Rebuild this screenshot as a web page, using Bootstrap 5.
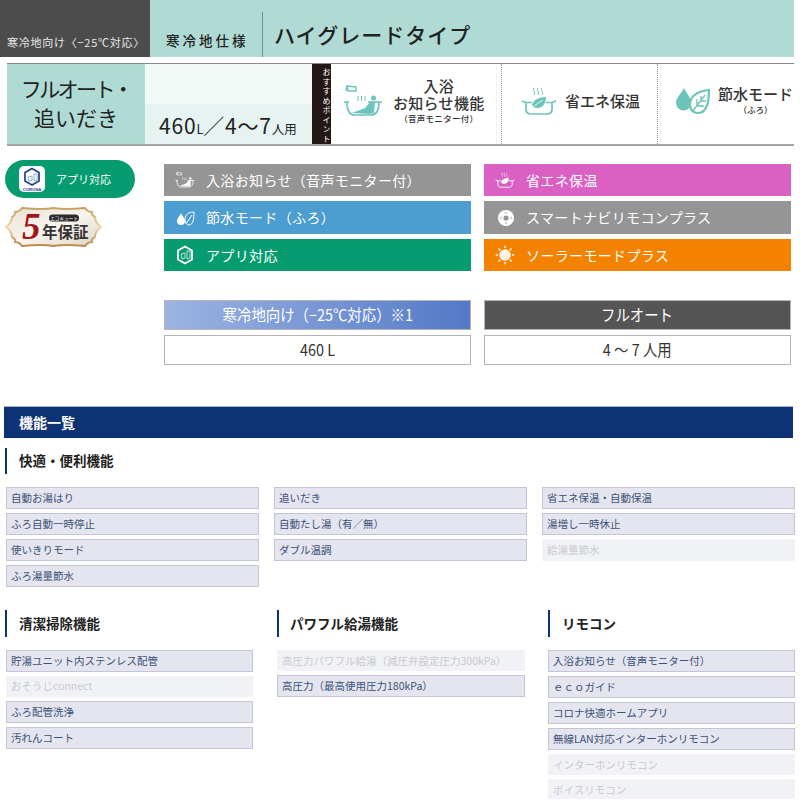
<!DOCTYPE html>
<html lang="ja">
<head>
    <meta charset="UTF-8">
    <title>ハイグレードタイプ</title>
    <link href="https://cdn.jsdelivr.net/npm/bootstrap@5.3.2/dist/css/bootstrap.min.css" rel="stylesheet">
    <style>
        html, body { height: 800px; overflow: hidden; }
        body { font-family: "Noto Sans CJK JP", "Noto Sans", sans-serif; background: #fff; color: #222; }
        .page { width: 800px; height: 800px; overflow: hidden; }

        /* product banner */
        .type-bar { height: 57px; width: 794px; background: #b0dbd5; }
        .type-dark { width: 150px; background: #4c4c4c; color: #e8e8e8; font-size: 11px; padding: 0 0 7px 7px; letter-spacing: .75px; white-space: nowrap; }
        .type-spec { width: 112px; font-size: 13.5px; font-weight: 500; letter-spacing: 3px; padding: 0 0 7px 16px; white-space: nowrap; }
        .type-name { border-left: 1px solid #6f8f8a; margin-top: 12px; padding-left: 11px; font-size: 21px; font-weight: 500; letter-spacing: 1px; }

        .point-bar { height: 83px; width: 787px; margin: 6px 0 14px 7px; border-top: 1px solid #888; border-bottom: 2px solid #a5a5a5; }
        .point-title { width: 138px; background: #b0dbd5; font-size: 21px; line-height: 29px; text-align: center; padding-top: 10px; }
        .point-title span { letter-spacing: -2.6px; }
        .point-size { width: 167px; background: linear-gradient(#f1f9f7 50%, #e6f3f0 50%); font-size: 21px; padding: 0 0 3px 14px; letter-spacing: .8px; white-space: nowrap; }
        .point-size small { font-size: 12.5px; letter-spacing: 0; }
        .point-label { width: 19px; background: #231815; color: #fff; font-size: 8px; line-height: 9px; letter-spacing: 1.5px; writing-mode: vertical-rl; text-align: center; padding-top: 3px; white-space: nowrap; }
        .point-item { border-right: 1px dotted #999; color: #333; white-space: nowrap; padding-bottom: 7px; }
        .pi-bath { width: 171px; padding-left: 12px; }
        .pi-bath .pi-text { letter-spacing: .3px; margin-left: 10px; }
        .pi-eco { width: 156px; padding-left: 19px; }
        .pi-water { width: 136px; padding-left: 18px; border-right: 0; overflow: hidden; }
        .pi-icon { color: #6cc4ba; flex: none; }
        .pi-text { font-size: 15px; line-height: 17px; font-weight: 500; text-align: center; }
        .pi-text small { display: block; font-size: 8.5px; line-height: 14px; }

        /* left badges */
        .side { width: 164px; padding-left: 5px; }
        .app-pill { width: 130px; height: 38px; border-radius: 19px; background: #069c70; color: #fff; font-size: 11px; padding-left: 14px; }
        .app-logo { width: 26px; height: 26px; background: #fff; border-radius: 5px; margin-right: 11px; }
        .warranty { margin-top: 9px; width: 97px; height: 40px; }

        /* function bars */
        .func-grid { width: 627px; margin-top: 4px; display: grid; grid-template-columns: 307px 307px; grid-template-rows: 32px 33px 32px; column-gap: 13px; row-gap: 5px; }
        .func { color: #fff; font-size: 14px; padding-left: 11px; letter-spacing: .35px; }
        .func svg { width: 20px; height: 20px; margin-right: 11px; flex: none; }
        .func-gray { background: #959595; }
        .func-pink { background: #db60c4; }
        .func-blue { background: #4c9dd0; }
        .func-green { background: #069c70; }
        .func-orange { background: #f38200; }

        .spec-grid { width: 627px; margin: 29px 0 0 164px; display: grid; grid-template-columns: 307px 307px; column-gap: 13px; row-gap: 5px; }
        .spec-head, .spec-val { height: 30px; border: 1px solid #b5b5b5; text-align: center; font-size: 16px; line-height: 27px; }
        .spec-head span, .spec-val span { display: inline-block; transform: scaleX(.9); white-space: nowrap; }
        .spec-head { color: #fff; }
        .spec-cold { background: linear-gradient(90deg, #9db4e2, #5379c7); }
        .spec-auto { background: #555; }
        .spec-val { color: #333; }

        /* function list */
        .list-title { margin: 41px 0 0 4px; width: 789px; height: 32px; background: #0e3374; border-top: 1px solid #a9b6cc; color: #fff; font-size: 14px; font-weight: 700; line-height: 30px; padding-left: 15px; }
        .group-title { border-left: 2px solid #0e3374; height: 26px; margin: 0 0 13px 5px; padding-left: 12px; font-size: 13.5px; font-weight: 700; line-height: 25px; color: #222; }
        .comfort { margin-top: 10px; }
        .comfort-grid { display: grid; grid-template-columns: 253px 253px 253px; column-gap: 15px; margin-left: 6px; row-gap: 4px; }
        .fn { height: 22px; background: #e4e5ef; border: 1px solid #c3c5da; border-width: 1px 1px 1.5px 1px; color: #3a5278; font-size: 10.5px; line-height: 20px; padding-left: 4px; white-space: nowrap; overflow: hidden; }
        .fn.off { background: #f1f2f6; border-color: #f1f2f6; color: #c9cad0; }
        .bottom { margin-top: 23px; display: grid; grid-template-columns: 276px 271px 253px; }
        .bottom .group-title { height: 27px; line-height: 27px; }
        .stack { display: flex; flex-direction: column; gap: 4px; margin-left: 6px; width: 247px; }
        .stack .fn.off { height: 20.5px; }
        .bottom > div:first-child .fn.off { line-height: 18px; }
        .bottom > div + div .group-title { margin-left: 1px; }
        .bottom > div + div .stack { margin-left: 1px; }
        .bottom > div:nth-child(2) .stack { width: 248px; }
        .bottom > div:nth-child(2) .group-title { padding-left: 11px; }
    </style>
</head>
<body>

<!-- 共通アイコン -->
<svg width="0" height="0" class="position-absolute">
    <symbol id="ic-bath" viewBox="0 0 40 34">
        <g fill="none" stroke="currentColor" stroke-width="1.7">
            <path d="M1 18h5M25 18h14M4 18c0 8 2 13 8 13h16c6 0 8-5 8-13"/>
            <path d="M4 2l9 1v4H5zM4 2l-1 5" stroke-width="1.4"/>
            <path d="M15 12v5M18.500 12v5M22 12v5" stroke-width="1"/>
        </g>
        <circle cx="30.500" cy="14" r="2.500" fill="currentColor"/>
        <path d="M9 29l13-5 5-6h5l-1 11-4 1z" fill="currentColor"/>
    </symbol>
    <symbol id="ic-eco" viewBox="0 0 36 28">
        <g fill="none" stroke="currentColor" stroke-width="1.7">
            <path d="M1 14l4 1.500V22c0 3 2 5 5 5h16c3 0 5-2 5-5v-6.500l4-1.500M5 15.500h6M25 15.500h6"/>
            <path d="M13 1c-2 2 2 4 0 7M17 1c-2 2 2 4 0 7M21 1c-2 2 2 4 0 7" stroke-width="1"/>
        </g>
        <path d="M11 18c1-5 7-8 14-8 0 6-3 11-9 11-2 0-4-1-5-3z" fill="currentColor"/>
        <path d="M13 19l9-6" stroke="#fff" stroke-width=".8"/>
    </symbol>
    <symbol id="ic-water" viewBox="0 0 34 28">
        <path d="M8 1c2 5 7 9 7 15a7.500 7.500 0 0 1-15 0C0 10 6 6 8 1z" fill="currentColor"/>
        <path d="M33 3C24 4 14 7 14 18c0 5 4 8 8 8 8 0 11-10 11-23z" fill="#fff" stroke="currentColor" stroke-width="2.200"/>
        <path d="M16 25L29 8M21 19v-7M21 19h7M25 14v-5M25 14h5" fill="none" stroke="currentColor" stroke-width="1.300"/>
    </symbol>
    <symbol id="ic-app" viewBox="0 0 18 20">
        <path d="M9 1.500l7 4v9l-7 4-7-4v-9z" fill="none" stroke="currentColor" stroke-width="1.800"/>
        <path d="M11 6h3v7l-3 1zM5 9l4-1v5l-3 1z" fill="none" stroke="currentColor" stroke-width=".7"/>
    </symbol>
</svg>

<div class="page">

    <!-- 見出し -->
    <div class="type-bar d-flex">
        <div class="type-dark d-flex align-items-end">寒冷地向け〈−25℃対応〉</div>
        <div class="type-spec d-flex align-items-end">寒冷地仕様</div>
        <div class="type-name d-flex align-items-center">ハイグレードタイプ</div>
    </div>

    <!-- おすすめポイント -->
    <div class="point-bar d-flex">
        <div class="point-title"><span>フルオート・</span><br>追いだき</div>
        <div class="point-size d-flex align-items-end"><span>460<small>L</small>／4〜7<small>人用</small></span></div>
        <div class="point-label">おすすめポイント</div>
        <div class="point-item pi-bath d-flex align-items-center">
            <svg class="pi-icon" width="40" height="34"><use href="#ic-bath"/></svg>
            <div class="pi-text"><div>入浴</div>お知らせ機能<small>（音声モニター付）</small></div>
        </div>
        <div class="point-item pi-eco d-flex align-items-center">
            <svg class="pi-icon" width="36" height="28"><use href="#ic-eco"/></svg>
            <div class="pi-text ms-2">省エネ保温</div>
        </div>
        <div class="point-item pi-water d-flex align-items-center">
            <svg class="pi-icon" width="34" height="28"><use href="#ic-water"/></svg>
            <div class="pi-text ms-2">節水モード<small>（ふろ）</small></div>
        </div>
    </div>

    <div class="d-flex">
        <div class="side">
            <div class="app-pill d-flex align-items-center">
                <div class="app-logo">
                    <svg width="26" height="26" viewBox="0 0 26 26">
                        <g fill="none" stroke="#23408e" stroke-width="1.700">
                            <path d="M13 2.500l7 4v8.500l-7 4-7-4V6.500z"/>
                        </g>
                        <path d="M15 8h3v6l-3 1zM9 11l4-1v4l-3 1z" fill="none" stroke="#5a8fc0" stroke-width=".7"/>
                        <text x="13" y="24.500" text-anchor="middle" font-size="4.200" font-weight="700" fill="#23408e" font-family="Liberation Sans">CORONA</text>
                    </svg>
                </div>
                <span>アプリ対応</span>
            </div>
            <svg class="warranty d-block" viewBox="0 0 97 40">
                <defs>
                    <linearGradient id="gold" x1="0" y1="0" x2="0" y2="1">
                        <stop offset="0" stop-color="#c9a063"/><stop offset=".5" stop-color="#ecd9ac"/><stop offset="1" stop-color="#b98a4c"/>
                    </linearGradient>
                    <linearGradient id="cream" x1="0" y1="0" x2="1" y2="1">
                        <stop offset="0" stop-color="#e9e2d3"/><stop offset=".5" stop-color="#f8f5ee"/><stop offset="1" stop-color="#ded5c3"/>
                    </linearGradient>
                </defs>
                <path d="M17 1c10 1 21 2 31.500 0C59 3 70 2 80 1c2 3 4 4 7 4-1 3 1 4 3 5 0 3 2 7 6 10-4 3-6 7-6 10-2 1-4 2-3 5-3 0-5 1-7 4-10-1-21-2-31.500 0C38 37 27 38 17 39c-2-3-4-4-7-4 1-3-1-4-3-5 0-3-2-7-6-10 4-3 6-7 6-10 2-1 4-2 3-5 3 0 5-1 7-4z" fill="url(#cream)" stroke="url(#gold)" stroke-width="2"/>
                <rect x="44" y="7.500" width="30" height="7" rx="3.500" fill="#2b2b2b"/>
                <text x="59" y="13" text-anchor="middle" font-size="4.600" fill="#fff" font-family="Noto Sans CJK JP">エコキュート</text>
                <text x="17" y="32" font-size="37" fill="#a3141d" font-family="Liberation Serif" font-style="italic" font-weight="700">5</text>
                <text x="37" y="31" font-size="15.500" fill="#333" font-family="Noto Sans CJK JP" font-weight="700">年保証</text>
            </svg>
        </div>
        <div class="func-grid">
            <div class="func func-gray d-flex align-items-center">
                <svg class="text-light"><use href="#ic-bath"/></svg>
                入浴お知らせ（音声モニター付）
            </div>
            <div class="func func-pink d-flex align-items-center">
                <svg class="text-light"><use href="#ic-eco"/></svg>
                省エネ保温
            </div>
            <div class="func func-blue d-flex align-items-center">
                <svg viewBox="0 0 20 20" fill="none" stroke="#fff" stroke-width="1"><path d="M6 5c1 3 4 5 4 8a4 4 0 0 1-8 0c0-3 3-5 4-8z" fill="#fff" stroke="none"/><path d="M19 4c-5 0-9 2-9 8 0 3 2 5 4 5 4 0 5-6 5-13zM11 16l6-9"/></svg>
                節水モード（ふろ）
            </div>
            <div class="func func-gray d-flex align-items-center">
                <svg viewBox="0 0 20 20"><circle cx="11" cy="10" r="8" fill="#fff"/><circle cx="11" cy="10" r="2.600" fill="#959595"/><path d="M11 3.500l1.500 2h-3zM11 16.500l1.500-2h-3zM4.500 10l2-1.500v3zM17.500 10l-2-1.500v3z" fill="#bbb"/></svg>
                スマートナビリモコンプラス
            </div>
            <div class="func func-green d-flex align-items-center">
                <svg class="text-white"><use href="#ic-app"/></svg>
                アプリ対応
            </div>
            <div class="func func-orange d-flex align-items-center">
                <svg viewBox="0 0 20 20" fill="#fff4e4"><circle cx="10" cy="10" r="5.800"/><path d="M10 0l1.300 3H8.700zM10 20l1.300-3H8.700zM0 10l3-1.300v2.600zM20 10l-3-1.300v2.600zM3 3l3 1.200L4.200 6zM17 3l-3 1.200L15.800 6zM3 17l3-1.200L4.200 14zM17 17l-3-1.200L15.800 14z"/></svg>
                ソーラーモードプラス
            </div>
        </div>
    </div>

    <div class="spec-grid">
        <div class="spec-head spec-cold"><span>寒冷地向け（−25℃対応）※1</span></div>
        <div class="spec-head spec-auto"><span>フルオート</span></div>
        <div class="spec-val"><span>460 L</span></div>
        <div class="spec-val"><span>4 〜 7 人用</span></div>
    </div>

    <div class="list-title">機能一覧</div>

    <div class="comfort">
        <div class="group-title">快適・便利機能</div>
        <div class="comfort-grid">
            <div class="fn">自動お湯はり</div>
            <div class="fn">追いだき</div>
            <div class="fn">省エネ保温・自動保温</div>
            <div class="fn">ふろ自動一時停止</div>
            <div class="fn">自動たし湯（有／無）</div>
            <div class="fn">湯増し一時休止</div>
            <div class="fn">使いきりモード</div>
            <div class="fn">ダブル温調</div>
            <div class="fn off">給湯量節水</div>
            <div class="fn">ふろ湯量節水</div>
        </div>
    </div>

    <div class="bottom">
        <div>
            <div class="group-title">清潔掃除機能</div>
            <div class="stack">
                <div class="fn">貯湯ユニット内ステンレス配管</div>
                <div class="fn off">おそうじconnect</div>
                <div class="fn">ふろ配管洗浄</div>
                <div class="fn">汚れんコート</div>
            </div>
        </div>
        <div>
            <div class="group-title">パワフル給湯機能</div>
            <div class="stack">
                <div class="fn off">高圧力パワフル給湯（減圧弁設定圧力300kPa）</div>
                <div class="fn">高圧力（最高使用圧力180kPa）</div>
            </div>
        </div>
        <div>
            <div class="group-title">リモコン</div>
            <div class="stack">
                <div class="fn">入浴お知らせ（音声モニター付）</div>
                <div class="fn">ｅｃｏガイド</div>
                <div class="fn">コロナ快適ホームアプリ</div>
                <div class="fn">無線LAN対応インターホンリモコン</div>
                <div class="fn off">インターホンリモコン</div>
                <div class="fn off">ボイスリモコン</div>
            </div>
        </div>
    </div>
</div>
<script src="https://cdn.jsdelivr.net/npm/bootstrap@5.3.2/dist/js/bootstrap.bundle.min.js"></script>
</body>
</html>
